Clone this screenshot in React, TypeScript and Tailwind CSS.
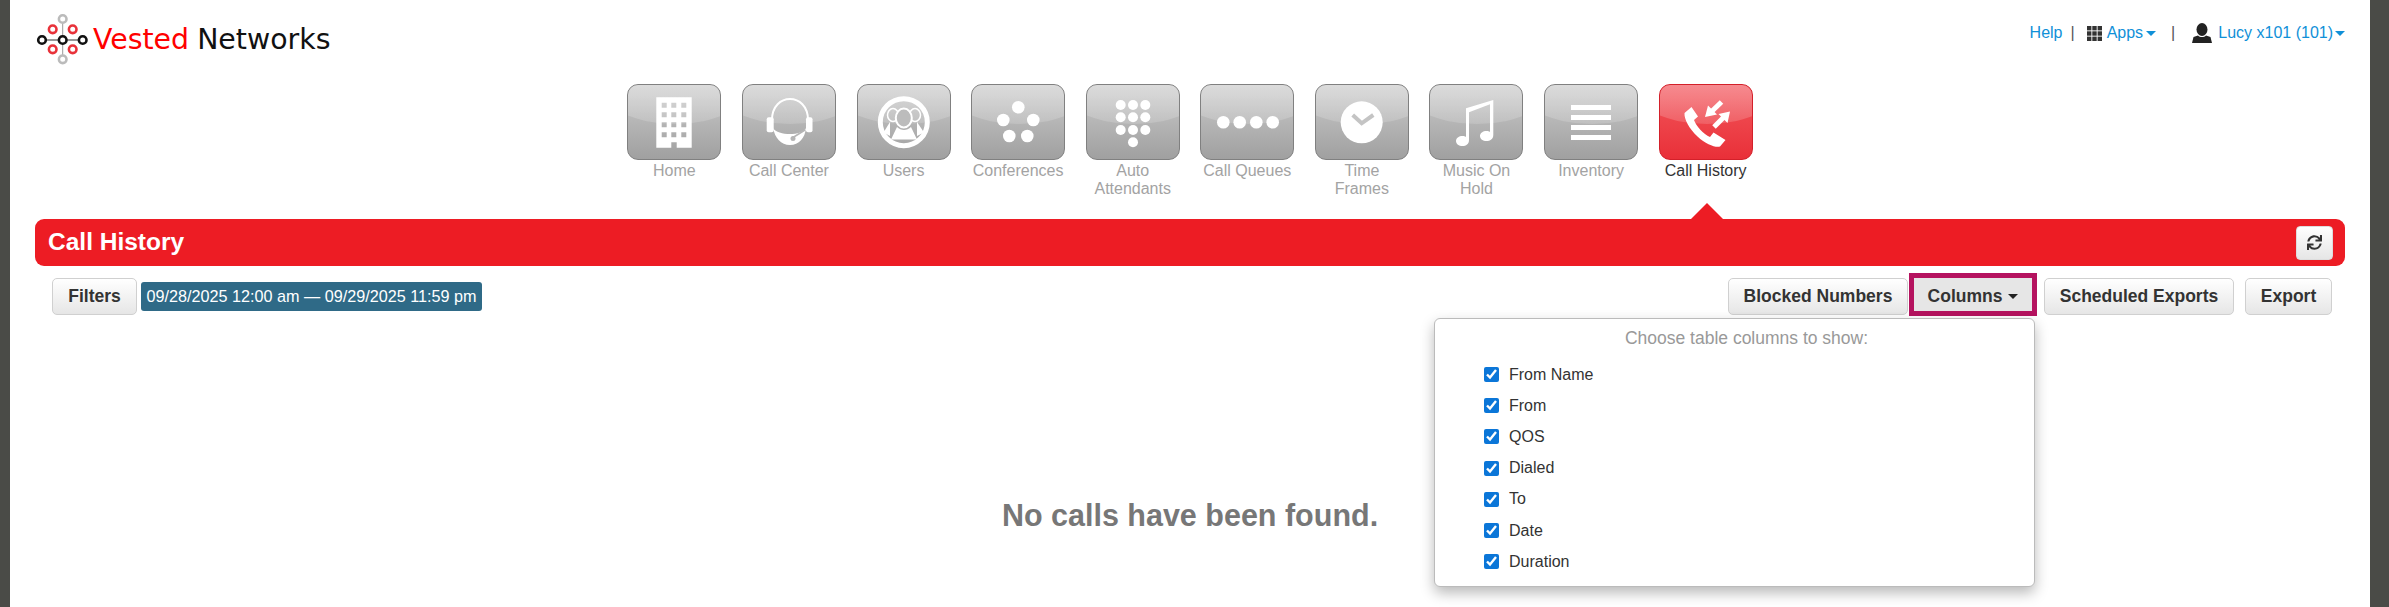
import { ReactNode } from 'react';
import { FaSync } from 'react-icons/fa';

const columns = ['From Name', 'From', 'QOS', 'Dialed', 'To', 'Date', 'Duration'];

const dots = (points: number[][], r: number) =>
  points.map(([cx, cy]) => <circle key={`${cx}-${cy}`} cx={cx} cy={cy} r={r} fill="#fff" />);

const windows = [18.7, 28.3, 38.3, 48.3]
  .flatMap((y) => [34.7, 44.3, 54.3].map((x) => `M${x} ${y}h5v5h-5z`))
  .join('');

const tiles: { label: string[]; active?: boolean; icon: ReactNode }[] = [
  {
    label: ['Home'],
    icon: <path fillRule="evenodd" fill="#fff" d={`M29.3 13.3h35.4v50.4H49.7v-5.4h-5.4v5.4H29.3z${windows}`} />,
  },
  {
    label: ['Call Center'],
    icon: (
      <>
        <path d="M30 36C30 8 66 8 66 36" fill="none" stroke="#fff" strokeWidth="2" />
        <rect x="24.7" y="33.3" width="7" height="15" rx="2" fill="#fff" />
        <rect x="64" y="33.3" width="6.5" height="15" rx="2" fill="#fff" />
        <path d="M31 44C36 52 60 52 64 44C63 54 57 61 48 61C39 61 33 54 31 44Z" fill="#fff" />
        <path d="M51 53.5L63 46" stroke="#b5b5b5" strokeWidth="1.5" />
        <circle cx="51" cy="54.5" r="2.5" fill="#b5b5b5" />
      </>
    ),
  },
  {
    label: ['Users'],
    icon: (
      <>
        <circle cx="46.8" cy="38.2" r="23.5" fill="none" stroke="#fff" strokeWidth="5" />
        <ellipse cx="36" cy="31" rx="5.5" ry="6.5" fill="none" stroke="#fff" strokeWidth="1.5" />
        <ellipse cx="58" cy="31" rx="5.5" ry="6.5" fill="none" stroke="#fff" strokeWidth="1.5" />
        <path d="M33 38L26.5 48.5L33 52Z" fill="#fff" />
        <path d="M60 38L67 48.5L60 52Z" fill="#fff" />
        <ellipse cx="46.8" cy="34" rx="8" ry="9.5" fill="#bcbcbc" stroke="#fff" strokeWidth="2" />
        <path d="M40 43L34 55.5H60L54 43C50 47 44 47 40 43Z" fill="#fff" />
      </>
    ),
  },
  {
    label: ['Conferences'],
    icon: dots([[47.3, 23.3], [32.3, 36], [62.3, 36], [38.3, 52], [56.3, 52]], 6.3),
  },
  {
    label: ['Auto', 'Attendants'],
    icon: dots(
      [
        [34.7, 21], [47, 21], [59.3, 21],
        [34.7, 33.3], [47, 33.3], [59.3, 33.3],
        [34.7, 46], [47, 46], [59.3, 46],
        [47, 58.3],
      ],
      5,
    ),
  },
  {
    label: ['Call Queues'],
    icon: dots([[23.3, 38.3], [39.7, 38.3], [56.3, 38.3], [72.7, 38.3]], 6.3),
  },
  {
    label: ['Time', 'Frames'],
    icon: (
      <>
        <circle cx="46.7" cy="38.3" r="21" fill="#fff" />
        <path d="M37.7 31L46.7 39.3L58.3 31" fill="none" stroke="#c4c4c4" strokeWidth="4" />
      </>
    ),
  },
  {
    label: ['Music On', 'Hold'],
    icon: (
      <path
        fill="#fff"
        d="M37 24.3L64.3 16V51C64.3 55 61 57 57.5 57C54 57 51 55 51 52C51 49 54 47 57.5 47C59 47 60 47.3 61 48V20.3L40 28.3V56C40 60 37 62 33.5 62C30 62 27 60 27 57C27 54 30 52 33.5 52C35 52 36 52.3 37 53Z"
      />
    ),
  },
  {
    label: ['Inventory'],
    icon: (
      <>
        <rect x="27" y="21" width="40" height="5" fill="#fff" />
        <rect x="27" y="31" width="40" height="5" fill="#fff" />
        <rect x="27" y="41" width="40" height="5" fill="#fff" />
        <rect x="27" y="51" width="40" height="5" fill="#fff" />
      </>
    ),
  },
  {
    label: ['Call History'],
    active: true,
    icon: (
      <>
        <path
          fill="#fff"
          d="M25.5 29L32.5 23L39 32.5L35 36C37 42 44.5 50 51 53L54.5 48.5L66.5 56L61 62.5C57 64 47 60.5 38.5 52.5C30 44.5 25 35 25.5 29Z"
        />
        <path d="M62.5 18L50.5 29.5" stroke="#fff" strokeWidth="5" />
        <path d="M46 33L49 21.5L58 30.5Z" fill="#fff" />
        <path d="M55 43L66 32" stroke="#fff" strokeWidth="5" />
        <path d="M71 27.5L68.5 39L59.5 30Z" fill="#fff" />
      </>
    ),
  },
];

const Caret = ({ className }: { className: string }) => (
  <span className={`inline-block border-x-[5px] border-t-[5px] border-x-transparent ${className}`} />
);

const toolButton =
  'flex items-center justify-center h-[37px] rounded-[5px] border border-[#d0d0d0] bg-linear-to-b from-white to-[#e6e6e6] text-[17.5px] font-bold text-[#333]';

const App = () => {
  return (
    <div className="flex min-h-[607px] bg-white font-['Liberation_Sans',Arial,sans-serif] text-[16px] text-[#333]">
      <div className="w-[10px] shrink-0 bg-[#4a4b47]" />

      <div className="flex-1 min-w-0 h-[607px] overflow-hidden">
        <header className="flex justify-between h-[84px] pl-[25px] pr-[25px]">
          <div className="flex items-start pt-[10px]">
            <svg width="56" height="56" viewBox="33 10 56 56" className="shrink-0">
              <path d="M44 40H77" stroke="#333" strokeWidth="1" />
              <path d="M60.7 23V55" stroke="#999" strokeWidth="1" />
              {[[50.7, 29.3], [70.7, 29.3], [50.7, 49.3], [70.7, 49.3]].map(([cx, cy]) => (
                <circle key={`${cx}-${cy}`} cx={cx} cy={cy} r="3.8" fill="#fff" stroke="#e8323a" strokeWidth="2.6" />
              ))}
              {[[40, 40], [60.7, 40], [80.7, 40]].map(([cx, cy]) => (
                <circle key={cx} cx={cx} cy={cy} r="3.8" fill="#fff" stroke="#111" strokeWidth="2.6" />
              ))}
              {[[60.7, 19], [60.7, 59.3]].map(([cx, cy]) => (
                <circle key={cy} cx={cx} cy={cy} r="3.8" fill="#fff" stroke="#bbb" strokeWidth="2.6" />
              ))}
            </svg>
            <div className="ml-[2px] mt-[12px] font-['DejaVu_Sans',sans-serif] text-[28.4px] leading-[36px] whitespace-pre">
              <span className="text-[#ff0000]">Vested</span>
              <span className="ml-[-1px] text-[#111]"> Networks</span>
            </div>
          </div>

          <div className="flex items-center h-[24px] mt-[21px] leading-[24px] text-[#1090d8]">
            <span>Help</span>
            <span className="ml-[8px] text-[#555]">|</span>
            <svg width="15" height="15" viewBox="0 0 15 15" className="ml-[12px]">
              {[0, 5.3, 10.6].flatMap((y) =>
                [0, 5.3, 10.6].map((x) => <rect key={`${x}-${y}`} x={x} y={y} width="4.4" height="4.4" fill="#333" />),
              )}
            </svg>
            <span className="ml-[5px]">Apps</span>
            <Caret className="ml-[3px] border-t-[#1090d8]" />
            <span className="ml-[15px] text-[#555]">|</span>
            <svg width="20" height="20" viewBox="0 0 20 20" className="ml-[17px]">
              <ellipse cx="10" cy="6.5" rx="5.5" ry="6.5" fill="#222" />
              <path d="M0 20L1.5 14L6 12.5C8 14.5 12 14.5 14 12.5L18.5 14L20 20Z" fill="#222" />
            </svg>
            <span className="ml-[6px]">Lucy x101 (101)</span>
            <Caret className="ml-[2px] border-t-[#1090d8]" />
          </div>
        </header>

        <nav className="flex justify-center h-[135px]">
          {tiles.map((tile) => (
            <div key={tile.label[0]} className="w-[114.6px] flex flex-col items-center">
              <div
                className={
                  tile.active
                    ? 'relative w-[94px] h-[76px] overflow-hidden rounded-[11px] border border-[#d3202a] bg-linear-to-b from-[#f2545b] to-[#e92f38]'
                    : 'relative w-[94px] h-[76px] overflow-hidden rounded-[11px] border border-[#808080] bg-linear-to-b from-[#cbcbcb] to-[#a0a0a0]'
                }
              >
                <div className="absolute left-[-30px] top-[-42px] w-[154px] h-[81px] rounded-[50%] bg-linear-to-b from-white/50 to-white/15" />
                <svg viewBox="0 0 94 76" className="absolute left-[-1px] top-[-1px] w-[94px] h-[76px]">
                  {tile.icon}
                </svg>
              </div>
              <div
                className={
                  tile.active
                    ? 'pt-[2px] text-center leading-[18px] text-[#333]'
                    : 'pt-[2px] text-center leading-[18px] text-[#a3a3a3]'
                }
              >
                {tile.label.map((line) => (
                  <div key={line} className="whitespace-nowrap">
                    {line}
                  </div>
                ))}
              </div>
            </div>
          ))}
        </nav>

        <main className="mx-[25px]">
          <div className="relative flex items-center justify-between h-[47px] rounded-[9px] bg-[#ed1c24] pl-[13px] pr-[12px]">
            <span className="absolute left-[1656px] top-[-16px] border-x-[16px] border-b-[16px] border-x-transparent border-b-[#ed1c24]" />
            <h1 className="text-[24.5px] font-bold text-white">Call History</h1>
            <button className="flex items-center justify-center w-[37px] h-[34px] rounded-[4px] border border-[#ddd] bg-linear-to-b from-white to-[#e6e6e6] text-[#333]">
              <FaSync size={15} />
            </button>
          </div>

          <div className="flex items-end justify-between mt-[7px] pl-[17px] pr-[13px]">
            <div className="flex items-center gap-[4px] mb-[1px]">
              <button className={`${toolButton} w-[85px]`}>Filters</button>
              <span className="flex items-center justify-center w-[341px] h-[29px] rounded-[3px] bg-[#2f6a87] text-[16.2px] text-white whitespace-nowrap">
                09/28/2025 12:00 am — 09/29/2025 11:59 pm
              </span>
            </div>

            <div className="flex items-end mb-[1px]">
              <button className={`${toolButton} w-[180px]`}>Blocked Numbers</button>
              <div className="relative ml-[1px] -mb-[1px]">
                <button className="flex items-center justify-center w-[128px] h-[43px] pt-[3px] border-[5px] border-[#b5135f] bg-[#e6e6e6] text-[17.5px] font-bold text-[#333]">
                  Columns
                  <Caret className="ml-[6px] border-x-[4px] border-t-[4px] border-t-[#222]" />
                </button>

                <div className="absolute right-[2px] top-[45px] z-10 w-[601px] h-[269px] rounded-[6px] border border-[#bbb] bg-white shadow-[0_6px_14px_rgba(0,0,0,0.28)]">
                  <div className="h-[40px] pt-[10px] pl-[24px] text-center text-[17.5px] leading-[18px] font-normal text-[#999]">
                    Choose table columns to show:
                  </div>
                  <div className="pl-[49px]">
                    {columns.map((name) => (
                      <label key={name} className="flex items-center gap-[10px] h-[31.2px]">
                        <input type="checkbox" checked readOnly className="w-[15px] h-[15px] m-0 accent-[#0b76d8]" />
                        <span>{name}</span>
                      </label>
                    ))}
                  </div>
                </div>
              </div>
              <button className={`${toolButton} w-[190px] ml-[7px]`}>Scheduled Exports</button>
              <button className={`${toolButton} w-[87px] ml-[11px]`}>Export</button>
            </div>
          </div>

          <div className="mt-[181px] text-center text-[30.5px] leading-[36px] font-bold text-[#777]">
            No calls have been found.
          </div>
        </main>
      </div>

      <div className="w-[19px] shrink-0 bg-[#4a4b47]" />
    </div>
  );
};

export default App;
